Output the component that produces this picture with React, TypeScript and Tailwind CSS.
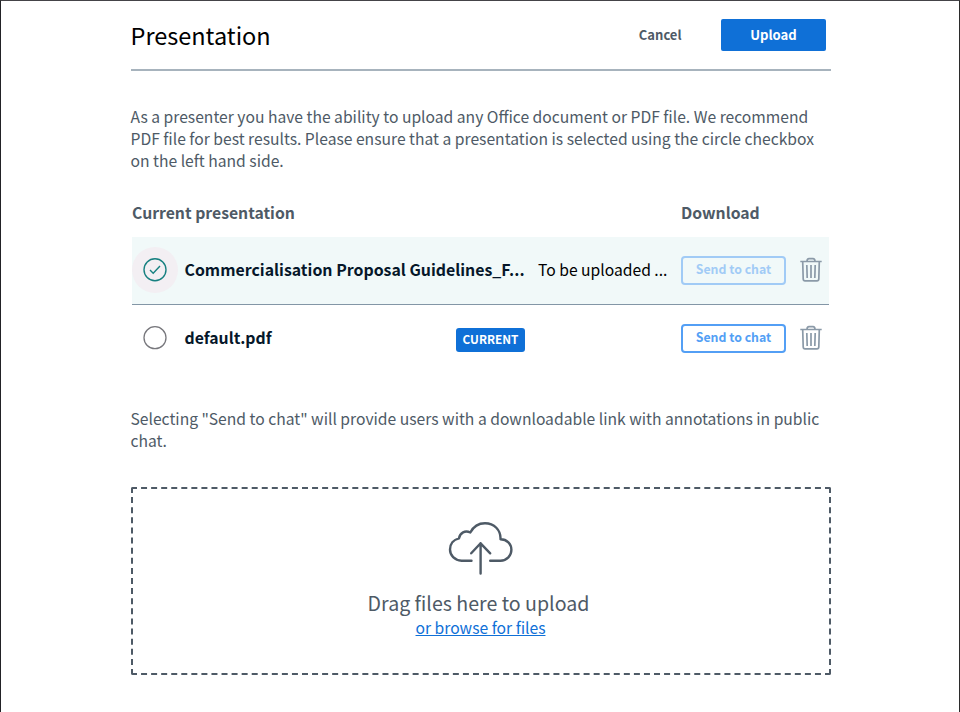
import React from "react";

function Trash() {
  return (
    <svg width="22" height="26" viewBox="0 0 22 26" fill="none" stroke="#8b9aa8" strokeWidth="1.7" className="block shrink-0">
      <path d="M0.3 4.5H21.7M7 4.5Q7 1.6 9 1.6H13Q15 1.6 15 4.5M2.7 4.5L3.2 22Q3.3 23.8 5 23.8H17Q18.7 23.8 18.8 22L19.3 4.5" />
      <path d="M6.8 8L7.2 21M11 8V21M15.2 8L14.8 21" />
    </svg>
  );
}

function SendButton({ disabled = false }: { disabled?: boolean }) {
  return (
    <button
      disabled={disabled}
      className={`flex h-[29px] w-[105px] shrink-0 items-center justify-center rounded-[4px] border-2 border-[#539ff5] pb-[3px] text-[12.3px] leading-none font-bold text-[#539ff5] ${disabled ? "opacity-50" : ""}`}
    >
      Send to chat
    </button>
  );
}

export default function App() {
  return (
    <div className="h-[712px] w-[960px] overflow-hidden border-t border-r border-l border-t-[#444347] border-r-[#2b2b2b] border-l-[#222226] bg-white font-['Noto_Sans_CJK_SC',sans-serif] text-[15.67px] leading-[22px] text-[#4e5a66]">
      <main className="ml-[130px] w-[700px]">
        <header className="flex h-[70px] items-start border-b-2 border-[#a7b3bd]">
          <h1 className="mt-[18px] -ml-[0.5px] flex-1 text-[23.5px] leading-[32px] text-black">Presentation</h1>
          <button className="mt-[18px] mr-[39.5px] h-8 text-[13px] leading-8 font-bold">Cancel</button>
          <button className="mt-[18px] mr-[5px] h-8 w-[105px] rounded-[2px] bg-[#0f70d7] text-[13.1px] leading-8 font-bold text-white">Upload</button>
        </header>

        <p className="mt-[35px] -ml-[0.5px] whitespace-nowrap">
          As a presenter you have the ability to upload any Office document or PDF file. We recommend
          <br />
          PDF file for best results. Please ensure that a presentation is selected using the circle checkbox
          <br />
          on the left hand side.
        </p>

        <section className="ml-px w-[697px]">
          <div className="mt-[30px] flex h-[22px] text-[15.75px] font-bold">
            <span className="w-[549px]">Current presentation</span>
            <span>Download</span>
          </div>
          <div className="mt-[13px] flex h-[68px] items-center border-b border-[#8396a6] bg-[#f1f9f9] pb-px text-black">
            <span className="flex size-[46px] shrink-0 items-center justify-center rounded-full bg-[#f3eff3]">
              <svg width="24" height="24" viewBox="0 0 24 24" fill="none" stroke="#178080" strokeWidth="1.4">
                <circle cx="12" cy="11.7" r="11" />
                <path d="M7 12.1L10.2 15.3L17 8" />
              </svg>
            </span>
            <span className="ml-[6.5px] w-[353.5px] pb-px text-[15.9px] whitespace-nowrap font-bold text-[#06172a]">Commercialisation Proposal Guidelines_F...</span>
            <span className="w-[143px] pb-px whitespace-nowrap">To be uploaded ...</span>
            <span className="pt-px"><SendButton disabled /></span>
            <span className="ml-[14px]"><Trash /></span>
          </div>
          <div className="flex h-[67px] items-center">
            <span className="flex size-[46px] shrink-0 items-center justify-center pb-px">
              <svg width="24" height="24" viewBox="0 0 24 24" fill="none" stroke="#77777c" strokeWidth="1.3">
                <circle cx="12" cy="11.7" r="11" />
              </svg>
            </span>
            <span className="ml-[6.5px] w-[271.5px] pb-px text-[15.8px] font-bold text-[#06172a]">default.pdf</span>
            <span className="mt-[3px] flex h-6 w-[69px] items-center justify-center rounded-[3px] bg-[#0f70d7] pb-[3px] text-[11.8px] leading-none font-bold text-white">CURRENT</span>
            <span className="ml-[156px]"><SendButton /></span>
            <span className="ml-[14px] pb-px"><Trash /></span>
          </div>
        </section>

        <p className="mt-[36px] -ml-[0.5px] whitespace-nowrap">
          Selecting "Send to chat" will provide users with a downloadable link with annotations in public
          <br />
          chat.
        </p>

        <section className="mt-[35px] flex h-[188px] flex-col items-center rounded-[2px] border-2 border-dashed border-[#4e5a66] pr-[3px]">
          <svg width="66" height="56" viewBox="0 0 66 56" fill="none" stroke="#4e5a66" strokeWidth="2.4" strokeLinecap="round" strokeLinejoin="round" className="mt-[30px] ml-[3px] block">
            <path d="M23.5 41.7H13.5C6.5 41.2 2 36.3 2 30.5C2 25 5.5 20.6 11 19.3C12 13.8 17 11 22.3 13.5C25.5 7.3 31 4.2 37 4.2C46 4.2 53 11 52.5 20.3C59 20.3 63.4 25 63.4 30.8C63.4 36.5 59 41.7 52.5 41.7H42.2" />
            <path d="M32.6 54.5V24.3M23.2 34.3L32.6 24.3L42.2 34.3" />
          </svg>
          <div className="mt-[13px] -ml-[2px] text-[19.6px] leading-[30px]">Drag files here to upload</div>
          <a href="#" className="ml-[2px] leading-[20px] text-[#0f70d7] underline">or browse for files</a>
        </section>
      </main>
    </div>
  );
}
